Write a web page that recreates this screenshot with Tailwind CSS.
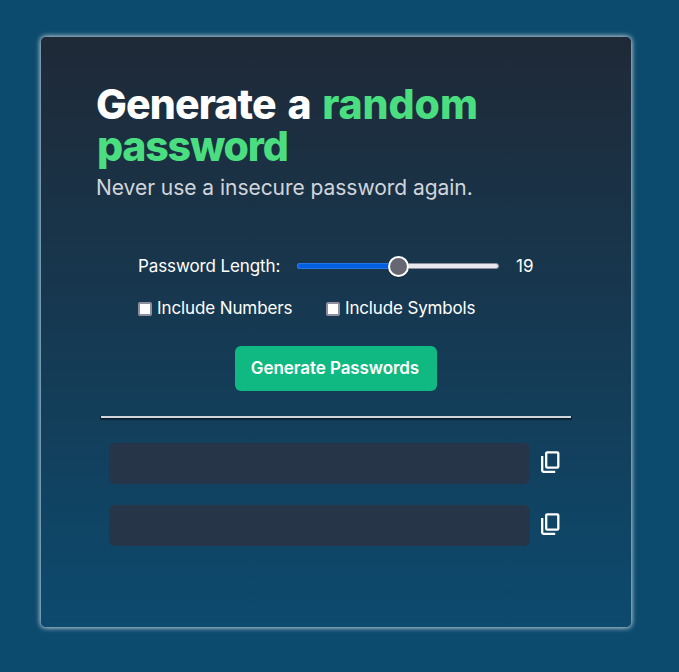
<!DOCTYPE html>
<html lang="en">
<head>
<meta charset="utf-8">
<title>Password Generator</title>
<script src="https://cdn.jsdelivr.net/npm/@tailwindcss/browser@4"></script>
</head>
<body class="min-h-screen overflow-hidden bg-[#0c4b6e] pl-[41px] pt-[37px] font-[Inter,sans-serif] text-white">
<main class="h-[590px] w-[590px] rounded-[5px] bg-linear-to-b/srgb from-[#1f2937] to-[#0c4a6e] pt-[46px] shadow-[0_0_5px_1px_rgba(255,255,255,0.75)]">
  <header class="pl-[56px]">
    <h1 class="-ml-px whitespace-nowrap text-[41px] leading-[42px] font-extrabold tracking-[-0.85px] [word-spacing:3.5px]">Generate a <span class="tracking-[-0.1px] text-[#4ade80]">random</span><br><span class="ml-px tracking-[-1.2px] text-[#4ade80]">password</span></h1>
    <p class="mt-[8px] -ml-px whitespace-nowrap text-[21px] leading-[25px] tracking-[-0.04px] text-[#d1d5db]">Never use a insecure password again.</p>
  </header>
  <section class="mt-[54px] pl-[97px] text-[17px] leading-[24px] tracking-[-0.11px]">
    <div class="flex items-center whitespace-nowrap">
      <span class="w-[159px]">Password Length:</span>
      <div class="flex h-[6px] w-[202px] items-center rounded-full border border-[#8f8f9d] bg-[#e9e9ed]">
        <div class="-ml-px h-[6px] w-[92px] shrink-0 rounded-l-full border border-r-0 border-[#2374e8] bg-[#0060df]"></div>
        <div class="-ml-[1px] size-[21px] shrink-0 rounded-full border-2 border-white bg-[#676774] shadow-[0_1px_1px_rgba(0,0,0,0.35)]"></div>
      </div>
      <span class="ml-[17px] tracking-[0.2px]">19</span>
    </div>
    <div class="mt-[18px] flex whitespace-nowrap">
      <label class="flex w-[188px] items-center gap-[5px]"><span class="mt-[2px] size-[14px] rounded-[2px] border-2 border-[#8f8f9d] bg-white"></span><span>Include Numbers</span></label>
      <label class="flex items-center gap-[5px]"><span class="mt-[2px] size-[14px] rounded-[2px] border-2 border-[#8f8f9d] bg-white"></span><span class="tracking-[-0.15px]">Include Symbols</span></label>
    </div>
  </section>
  <button class="mt-[26px] ml-[194px] block h-[45px] w-[202px] whitespace-nowrap rounded-[6px] bg-[#10b981] pr-[2px] text-[17px] font-semibold tracking-[-0.08px]">Generate Passwords</button>
  <div class="mt-[25px] ml-[60px] h-[2px] w-[470px] bg-[#d1d5db] shadow-[0_1px_1px_1px_rgba(0,0,0,0.45)]"></div>
  <section class="mt-[25px] flex flex-col gap-[21px] pl-[68px]">
    <div class="flex items-center">
      <div class="h-[41px] w-[421px] rounded-[6px] bg-[#273549]"></div>
      <svg class="-mt-[4px] ml-[8px] size-[24px]" viewBox="0 0 24 24" fill="none" stroke="white" stroke-width="2.3"><rect x="8.2" y="2.3" width="12.1" height="15.4" rx="1"/><path d="M4.2 6v14.5q0 1.3 1.3 1.3H17.2"/></svg>
    </div>
    <div class="flex items-center">
      <div class="h-[41px] w-[421px] rounded-[6px] bg-[#273549]"></div>
      <svg class="-mt-[4px] ml-[8px] size-[24px]" viewBox="0 0 24 24" fill="none" stroke="white" stroke-width="2.3"><rect x="8.2" y="2.3" width="12.1" height="15.4" rx="1"/><path d="M4.2 6v14.5q0 1.3 1.3 1.3H17.2"/></svg>
    </div>
  </section>
</main>
</body>
</html>
